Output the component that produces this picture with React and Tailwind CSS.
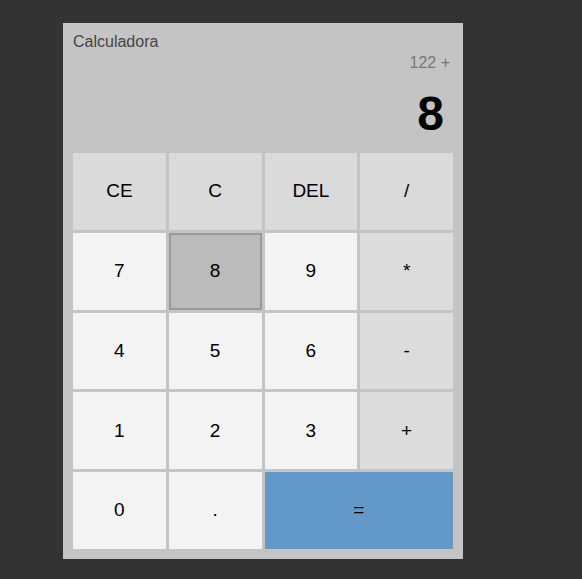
import { useState } from "react";

const keys = [
  { label: "CE", kind: "top" },
  { label: "C", kind: "top" },
  { label: "DEL", kind: "top" },
  { label: "/", kind: "top" },
  { label: "7", kind: "num" },
  { label: "8", kind: "num", pressed: true },
  { label: "9", kind: "num" },
  { label: "*", kind: "op" },
  { label: "4", kind: "num" },
  { label: "5", kind: "num" },
  { label: "6", kind: "num" },
  { label: "-", kind: "op" },
  { label: "1", kind: "num" },
  { label: "2", kind: "num" },
  { label: "3", kind: "num" },
  { label: "+", kind: "op" },
  { label: "0", kind: "num" },
  { label: ".", kind: "num" },
  { label: "=", kind: "eq" },
];

function keyClass(key) {
  if (key.pressed) return "bg-[#bbbbbb] border-2 border-[#9a9a9a]";
  switch (key.kind) {
    case "top":
      return "bg-[#dadada]";
    case "op":
      return "bg-[#dcdcdc]";
    case "eq":
      return "bg-[#6399c8] col-span-2";
    default:
      return "bg-[#f3f3f3]";
  }
}

export default function App() {
  const [previous] = useState("122 +");
  const [current] = useState("8");

  return (
    <div className="min-h-screen bg-[#333333] pl-[63px] pt-[23px] font-['Liberation_Sans',Arial,sans-serif]">
      <div className="w-[400px] bg-[#c4c4c4] p-[10px]">
        <div className="flex flex-col">
          <div className="text-[16px] leading-[18px] text-[#444444]">Calculadora</div>
          <div className="mt-[3px] pr-[3px] text-right text-[16px] leading-[18px] text-[#777777]">
            {previous}
          </div>
          <div className="mt-[14px] pr-[9px] text-right text-[48px] font-bold leading-[55px] text-black">
            {current}
          </div>
        </div>
        <div className="mt-[12px] grid h-[396px] grid-cols-4 grid-rows-5 gap-[3px]">
          {keys.map((key) => (
            <button
              key={key.label}
              className={`flex items-center justify-center text-[19px] text-black ${keyClass(key)}`}
            >
              {key.label}
            </button>
          ))}
        </div>
      </div>
    </div>
  );
}
